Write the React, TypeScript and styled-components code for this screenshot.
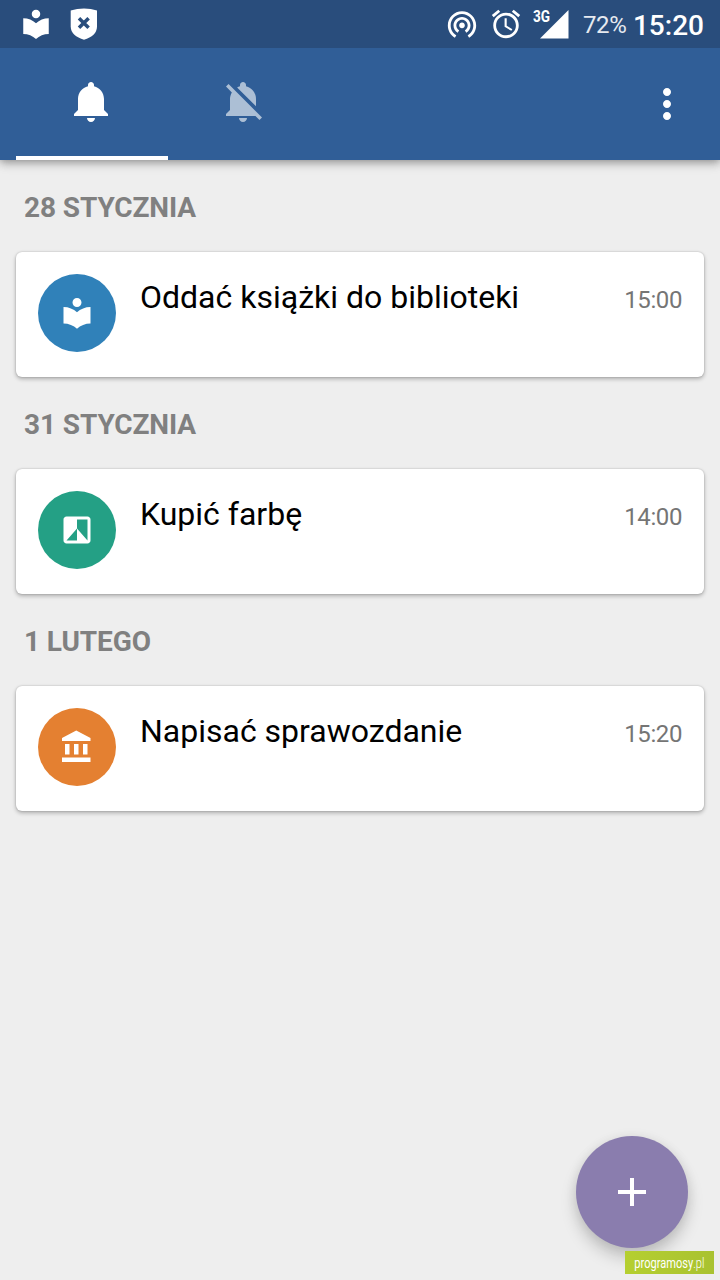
import React from "react";
import styled, { createGlobalStyle } from "styled-components";

const GlobalStyle = createGlobalStyle`
  * { box-sizing: border-box; }
  body {
    margin: 0;
    background: #eeeeee;
    font-family: Roboto, "Liberation Sans", sans-serif;
  }
`;

const LIBRARY =
  "M12 11.55C9.64 9.35 6.48 8 3 8v11c3.48 0 6.64 1.35 9 3.55 2.36-2.19 5.52-3.55 9-3.55V8c-3.48 0-6.64 1.35-9 3.55zM12 8c1.66 0 3-1.34 3-3s-1.34-3-3-3-3 1.34-3 3 1.34 3 3 3z";
const FILTER =
  "M19 3H5c-1.1 0-2 .9-2 2v14c0 1.1.9 2 2 2h14c1.1 0 2-.9 2-2V5c0-1.1-.9-2-2-2zm0 16l-7-8v8H5l7-8V5h7v14z";
const BANK =
  "M4 10v7h3v-7H4zm6 0v7h3v-7h-3zM2 22h19v-3H2v3zm14-12v7h3v-7h-3zm-4.5-9L2 6v2h19V6l-9.5-5z";
const BELL =
  "M11.5 22c1.1 0 2-.9 2-2h-4c0 1.1.9 2 2 2zm6.5-6v-5.5c0-3.07-2.13-5.64-5-6.32V3.5c0-.83-.67-1.5-1.5-1.5S10 2.67 10 3.5v.68c-2.87.68-5 3.25-5 6.32V16l-2 2v1h17v-1l-2-2z";
const BELL_OFF =
  "M11.5 22c1.1 0 2-.9 2-2h-4c0 1.1.9 2 2 2zM18 10.5c0-3.07-2.13-5.64-5-6.32V3.5c0-.83-.67-1.5-1.5-1.5S10 2.67 10 3.5v.68c-.51.12-.99.32-1.45.56L18 14.18V10.5zm-.27 8.5l2 2L21 19.73 4.27 3 3 4.27l2.92 2.92C5.34 8.16 5 9.29 5 10.5V16l-2 2v1h14.73z";
const MORE =
  "M12 8c1.1 0 2-.9 2-2s-.9-2-2-2-2 .9-2 2 .9 2 2 2zm0 2c-1.1 0-2 .9-2 2s.9 2 2 2 2-.9 2-2-.9-2-2-2zm0 6c-1.1 0-2 .9-2 2s.9 2 2 2 2-.9 2-2-.9-2-2-2z";
const TETHERING =
  "M12 11c-1.1 0-2 .9-2 2s.9 2 2 2 2-.9 2-2-.9-2-2-2zm6 2c0-3.31-2.69-6-6-6s-6 2.69-6 6c0 2.22 1.21 4.15 3 5.19l1-1.74c-1.19-.7-2-1.97-2-3.45 0-2.21 1.79-4 4-4s4 1.79 4 4c0 1.48-.81 2.75-2 3.45l1 1.74c1.79-1.04 3-2.97 3-5.19zM12 3C6.48 3 2 7.48 2 13c0 3.7 2.01 6.92 4.99 8.65l1-1.73C5.61 18.53 4 15.96 4 13c0-4.42 3.58-8 8-8s8 3.58 8 8c0 2.96-1.61 5.53-4 6.92l1 1.73c2.99-1.73 5-4.95 5-8.65 0-5.52-4.48-10-10-10z";
const ALARM =
  "M22 5.72l-4.6-3.86-1.29 1.53 4.6 3.86L22 5.72zM7.88 3.39L6.6 1.86 2 5.71l1.29 1.53 4.59-3.85zM12.5 8H11v6l4.75 2.85.75-1.23-4-2.37V8zM12 4c-4.97 0-9 4.03-9 9s4.02 9 9 9c4.97 0 9-4.03 9-9s-4.03-9-9-9zm0 16c-3.87 0-7-3.13-7-7s3.13-7 7-7 7 3.13 7 7-3.13 7-7 7z";
const PLUS = "M19 13h-6v6h-2v-6H5v-2h6V5h2v6h6v2z";

const Screen = styled.div`
  position: relative;
  display: flex;
  flex-direction: column;
  width: 720px;
  height: 1280px;
  overflow: hidden;
  background: #eeeeee;
`;

const StatusBar = styled.header`
  display: flex;
  justify-content: space-between;
  height: 48px;
  padding: 0 16px 0 19px;
  background: #294d7c;
  color: #ffffff;
  z-index: 2;
`;

const StatusGroup = styled.div<{ $gap: number }>`
  display: flex;
  align-items: center;
  gap: ${(p) => p.$gap}px;
`;

const Glyph = styled.svg<{ $size: number }>`
  display: block;
  flex: none;
  width: ${(p) => p.$size}px;
  height: ${(p) => p.$size}px;
  fill: currentColor;
`;

const Shield = styled.svg`
  display: block;
  width: 28px;
  height: 32px;
`;

const Signal = styled.div`
  display: flex;
  width: 37px;
  height: 30px;
`;

const NetworkType = styled.span`
  width: 7px;
  font-size: 17px;
  line-height: 15px;
  font-weight: 700;
  white-space: nowrap;
  transform: scaleX(0.8);
  transform-origin: left top;
`;

const SignalBars = styled.svg`
  display: block;
  flex: none;
  width: 29px;
  height: 30px;
`;

const Battery = styled.span`
  width: 43px;
  padding: 2px 0 0 3px;
  font-size: 24px;
  line-height: 28px;
  color: #e6eaf0;
  white-space: nowrap;
  letter-spacing: -0.4px;
`;

const Clock = styled.span`
  padding-top: 3px;
  font-size: 28px;
  line-height: 32px;
  font-weight: 500;
`;

const Toolbar = styled.nav`
  display: flex;
  justify-content: space-between;
  height: 112px;
  padding: 0 29px 0 16px;
  background: #305e97;
  color: #ffffff;
  box-shadow: 0 1px 9px rgba(0, 0, 0, 0.42), 0 6px 10px rgba(0, 0, 0, 0.08);
  z-index: 1;
`;

const Tabs = styled.div`
  display: flex;
`;

const Tab = styled.button<{ $active?: boolean }>`
  display: flex;
  align-items: center;
  justify-content: center;
  width: 152px;
  height: 112px;
  padding: 0;
  border: 0;
  border-bottom: 4px solid ${(p) => (p.$active ? "#ffffff" : "transparent")};
  background: none;
  color: ${(p) => (p.$active ? "#ffffff" : "#acbfd5")};
`;

const MenuButton = styled.button`
  display: flex;
  align-items: center;
  padding: 0;
  border: 0;
  background: none;
  color: #ffffff;
`;

const List = styled.main`
  display: flex;
  flex-direction: column;
  padding: 0 16px;
`;

const DayHeading = styled.h2`
  height: 92px;
  margin: 0;
  padding: 31px 8px 0;
  font-size: 28px;
  line-height: 33px;
  font-weight: 700;
  letter-spacing: -0.1px;
  color: #808080;
`;

const Card = styled.article`
  display: flex;
  align-items: flex-start;
  height: 125px;
  padding: 22px 22px 0;
  border-radius: 6px;
  background: #ffffff;
  box-shadow: 0 2px 4px rgba(0, 0, 0, 0.28), 0 0 2px rgba(0, 0, 0, 0.2);
`;

const Avatar = styled.div<{ $color: string }>`
  display: flex;
  flex: none;
  align-items: center;
  justify-content: center;
  width: 78px;
  height: 78px;
  border-radius: 50%;
  background: ${(p) => p.$color};
  color: #ffffff;
`;

const CardText = styled.div`
  display: flex;
  flex: 1;
  align-items: baseline;
  justify-content: space-between;
  padding: 4px 0 0 24px;
`;

const Title = styled.span`
  font-size: 32px;
  line-height: 38px;
  color: #000000;
`;

const Time = styled.time`
  font-size: 24px;
  line-height: 28px;
  letter-spacing: -0.4px;
  color: #757575;
`;

const AddButton = styled.button`
  position: absolute;
  right: 32px;
  bottom: 32px;
  display: flex;
  align-items: center;
  justify-content: center;
  width: 112px;
  height: 112px;
  padding: 0;
  border: 0;
  border-radius: 50%;
  background: #8a7dae;
  color: #ffffff;
  box-shadow: 0 10px 16px rgba(0, 0, 0, 0.18), 0 1px 12px rgba(0, 0, 0, 0.08);
`;

const SiteBadge = styled.div`
  position: absolute;
  right: 6px;
  bottom: 6px;
  display: flex;
  align-items: center;
  justify-content: center;
  width: 89px;
  height: 23px;
  background: linear-gradient(90deg, #b5cf30, #a9c230);
  color: #ffffff;
`;

const SiteName = styled.span`
  font-size: 14px;
  line-height: 22px;
  white-space: nowrap;
  transform: scaleX(0.79);
`;

const Light = styled.span`
  font-weight: 300;
`;

function Icon({ path, size }: { path: string; size: number }) {
  return (
    <Glyph $size={size} viewBox="0 0 24 24" aria-hidden="true">
      <path d={path} />
    </Glyph>
  );
}

const reminders = [
  { day: "28 STYCZNIA", title: "Oddać książki do biblioteki", time: "15:00", color: "#3081b9", icon: LIBRARY },
  { day: "31 STYCZNIA", title: "Kupić farbę", time: "14:00", color: "#24a085", icon: FILTER },
  { day: "1 LUTEGO", title: "Napisać sprawozdanie", time: "15:20", color: "#e48031", icon: BANK },
];

export default function App() {
  return (
    <>
      <GlobalStyle />
      <Screen>
        <StatusBar>
          <StatusGroup $gap={17}>
            <Icon path={LIBRARY} size={34} />
            <Shield viewBox="0 0 28 32">
              <path
                d="M14 .5C18.500 .5 23 1.200 27 2.500V18.500C27 25 22 29.500 14 31.700C6 29.500 .7 25 .7 18.500V2.500C5 1.200 9.500 .5 14 .5Z"
                fill="#fff"
              />
              <path d="M9 10.200L18.600 19.800M18.600 10.200L9 19.800" stroke="#294d7c" strokeWidth="3.500" />
            </Shield>
          </StatusGroup>
          <StatusGroup $gap={10}>
            <Icon path={TETHERING} size={34} />
            <Icon path={ALARM} size={34} />
            <Signal>
              <NetworkType>3G</NetworkType>
              <SignalBars viewBox="0 0 29 30">
                <path d="M28.500 1V29.500H0Z" fill="#fff" />
              </SignalBars>
            </Signal>
            <Battery>72%</Battery>
            <Clock>15:20</Clock>
          </StatusGroup>
        </StatusBar>
        <Toolbar>
          <Tabs>
            <Tab $active aria-label="Aktywne">
              <Icon path={BELL} size={48} />
            </Tab>
            <Tab aria-label="Nieaktywne">
              <Icon path={BELL_OFF} size={48} />
            </Tab>
          </Tabs>
          <MenuButton aria-label="Menu">
            <Icon path={MORE} size={48} />
          </MenuButton>
        </Toolbar>
        <List>
          {reminders.map((r) => (
            <React.Fragment key={r.day}>
              <DayHeading>{r.day}</DayHeading>
              <Card>
                <Avatar $color={r.color}>
                  <Icon path={r.icon} size={36} />
                </Avatar>
                <CardText>
                  <Title>{r.title}</Title>
                  <Time>{r.time}</Time>
                </CardText>
              </Card>
            </React.Fragment>
          ))}
        </List>
        <AddButton aria-label="Dodaj">
          <Icon path={PLUS} size={48} />
        </AddButton>
        <SiteBadge>
          <SiteName>
            programosy<Light>.pl</Light>
          </SiteName>
        </SiteBadge>
      </Screen>
    </>
  );
}
